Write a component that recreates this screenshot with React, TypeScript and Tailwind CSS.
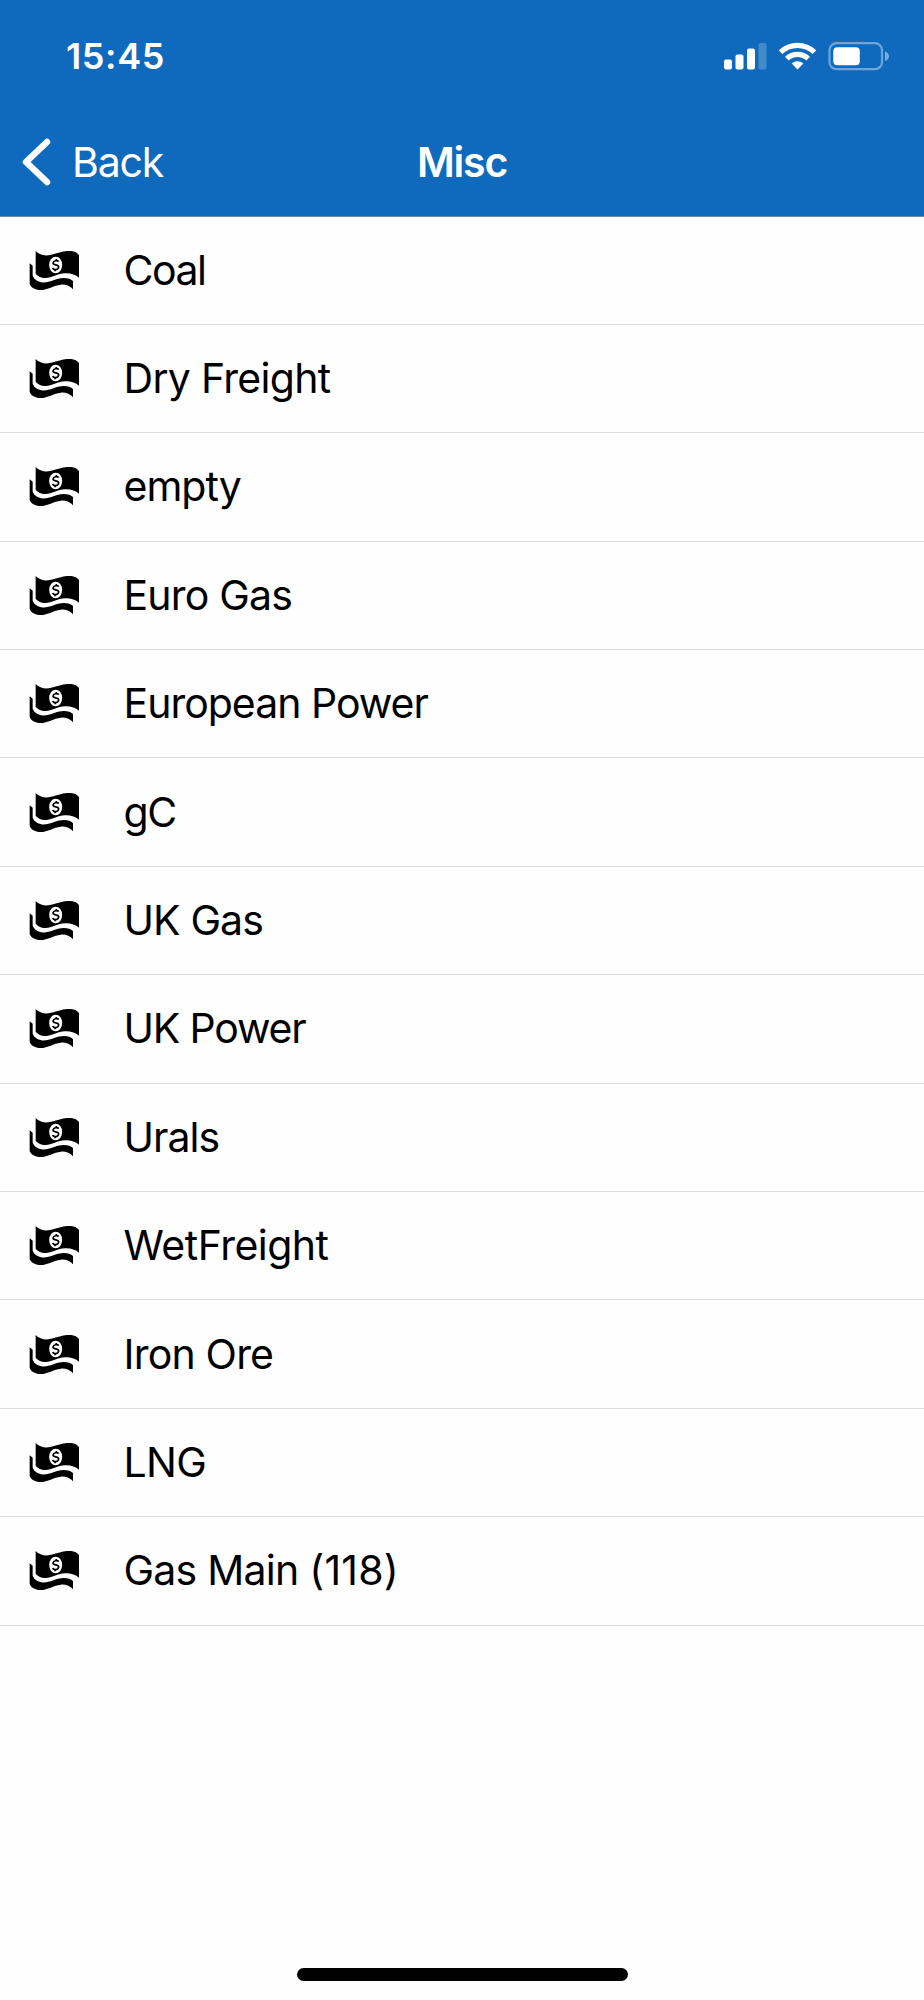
import React from "react";

const items: { label: string; suffix?: string; tracking: string }[] = [
  { label: "Coal", tracking: "tracking-[-1.5px]" },
  { label: "Dry Freight", tracking: "tracking-[-0.7px]" },
  { label: "empty", tracking: "tracking-[-1px]" },
  { label: "Euro Gas", tracking: "tracking-[-0.8px]" },
  { label: "European Power", tracking: "tracking-[-1px]" },
  { label: "gC", tracking: "tracking-[-1.5px]" },
  { label: "UK Gas", tracking: "tracking-[-0.9px]" },
  { label: "UK Power", tracking: "tracking-[-1.2px]" },
  { label: "Urals", tracking: "tracking-[-1px]" },
  { label: "WetFreight", tracking: "tracking-[-0.5px]" },
  { label: "Iron Ore", tracking: "tracking-[-0.8px]" },
  { label: "LNG", tracking: "tracking-[-0.7px]" },
  { label: "Gas Main ", suffix: "(118)", tracking: "tracking-[-0.75px]" },
];

function BanknotesIcon() {
  return (
    <svg viewBox="42 45 153 123" className="h-[41px] w-[51px] shrink-0" aria-hidden="true">
      <path
        d="M62 48C75 62 95 64 115 58C135 52 145 48 162 48C178 48 187 53 192 60V128C182 119 166 114 150 115C128 116 110 129 92 129C77 129 67 122 62 116Z"
        fill="#000"
      />
      <path
        d="M44 85L53 92V122C59 137 75 144 94 142C112 139 128 129 146 129C159 129 168 133 174 138V163C166 153 152 148 138 149C116 151 98 165 77 165C60 165 48 158 44 147Z"
        fill="#000"
      />
      <ellipse cx="122" cy="90" rx="19.5" ry="25" fill="#fefefe" />
      <path
        d="M131 80C128 75 115 76 114 84C114 92 131 87 131 96C130 105 116 107 113 99M124 72V78M120 103V109"
        fill="none"
        stroke="#000"
        strokeWidth="5"
      />
    </svg>
  );
}

function StatusIcons() {
  return (
    <svg viewBox="0 0 168 32" className="mt-[3px] h-8 w-[168px]" aria-hidden="true">
      <g fill="#fff">
        <rect x="0" y="17.5" width="8" height="10" rx="2" />
        <rect x="11.5" y="12.500" width="8" height="15" rx="2" />
        <rect x="23" y="6.500" width="8" height="21" rx="2" />
        <rect x="34.5" y="1" width="8" height="26.500" rx="2" opacity=".22" />
      </g>
      <g fill="none" stroke="#fff" strokeWidth="5.200">
        <path d="M56.500 10.200A24.500 24.500 0 0 1 90.500 10.200" />
        <path d="M62.800 16.700A15.400 15.400 0 0 1 84.200 16.700" />
      </g>
      <path d="M67.700 21.500A8.500 8.500 0 0 1 79.300 21.500L73.500 27.500Z" fill="#fff" />
      <rect x="105.500" y="1.200" width="52.500" height="26" rx="7" fill="none" stroke="#fff" strokeWidth="2.200" opacity=".4" />
      <rect x="109.300" y="5.200" width="26.500" height="18" rx="4" fill="#fff" />
      <path d="M161 9.500Q165 11 165 14.200Q165 17.400 161 19Z" fill="#fff" opacity=".45" />
    </svg>
  );
}

export default function App() {
  return (
    <div className="flex h-[2000px] w-[924px] flex-col bg-[#fefefe] font-['Inter','Liberation_Sans',sans-serif] text-black">
      <header className="flex h-[216.500px] shrink-0 flex-col border-b border-[#6f8fb0] bg-[#0f6abd] text-white">
        <div className="flex h-[112px] items-center justify-between pr-[32px] pl-[66px]">
          <span className="text-[36px] leading-none font-semibold tracking-[0.6px]">15:45</span>
          <StatusIcons />
        </div>
        <div className="grid h-[100px] grid-cols-3 items-center">
          <button className="flex items-center gap-[20px] pl-[22px]">
            <svg viewBox="0 0 30 48" className="h-12 w-[30px]" aria-hidden="true">
              <path d="M25 4L4 24L25 44" fill="none" stroke="#fff" strokeWidth="6.500" strokeLinecap="round" strokeLinejoin="round" />
            </svg>
            <span className="text-[41px] leading-none font-normal tracking-[-1.2px]">Back</span>
          </button>
          <h1 className="text-center text-[41px] leading-none font-semibold tracking-[-1.2px]">Misc</h1>
        </div>
      </header>
      <ul className="flex flex-col">
        {items.map((item) => (
          <li key={item.label} className="flex h-[108.400px] items-center border-b border-[#dcdcdc] pl-[29px]">
            <BanknotesIcon />
            <span className={`ml-[43.500px] text-[41px] leading-none whitespace-pre ${item.tracking}`}>
              {item.label}
              {item.suffix && <span className="tracking-[0.2px]">{item.suffix}</span>}
            </span>
          </li>
        ))}
      </ul>
      <div className="mt-auto mb-[19px] h-[13px] w-[331px] self-center rounded-full bg-black" />
    </div>
  );
}
